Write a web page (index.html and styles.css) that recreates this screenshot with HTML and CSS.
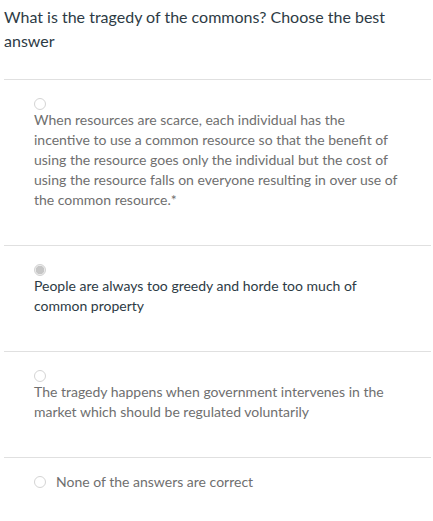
FILE: index.html
```html
<!DOCTYPE html>
<html>
<head>
<meta charset="utf-8">
<link rel="stylesheet" href="styles.css">
</head>
<body>
<div class="quiz">
  <div class="question">What is the tragedy of the commons? Choose the best answer</div>
  <div class="answers">
    <div class="answer">
      <span class="radio"></span>
      <div class="label">When resources are scarce, each individual has the incentive to use a common resource so that the benefit of using the resource goes only the individual but the cost of using the resource falls on everyone resulting in over use of the common resource.*</div>
    </div>
    <div class="answer selected">
      <span class="radio checked"></span>
      <div class="label">People are always too greedy and horde too much of common property</div>
    </div>
    <div class="answer">
      <span class="radio"></span>
      <div class="label">The tragedy happens when government intervenes in the market which should be regulated voluntarily</div>
    </div>
    <div class="answer inline">
      <span class="radio"></span>
      <div class="label">None of the answers are correct</div>
    </div>
  </div>
</div>
</body>
</html>
```

FILE: styles.css
```css
* { box-sizing: border-box; }
body {
  margin: 0;
  background: #fff;
  font-family: Lato, "Open Sans", sans-serif;
}
.quiz {
  padding: 5px 2px 0 4px;
}
.question {
  font-size: 16px;
  line-height: 24px;
  color: #2d3b45;
  margin-bottom: 26px;
}
.answer {
  border-top: 1px solid #e0e0e0;
  padding: 18px 30px 35px 30px;
}
.radio {
  display: block;
  width: 12px;
  height: 12px;
  border-radius: 50%;
  border: 1px solid #d4d4d4;
  background: #fff;
}
.radio.checked {
  background: radial-gradient(circle, #c6c6c6 0 4px, #ededed 4.5px);
  border-color: #d2d2d2;
}
.label {
  font-size: 14px;
  line-height: 20px;
  color: #6f6f6f;
}
.selected .label {
  color: #2d3b45;
}
.answer.inline {
  display: flex;
  align-items: center;
  gap: 10px;
  padding-top: 14px;
}
```
